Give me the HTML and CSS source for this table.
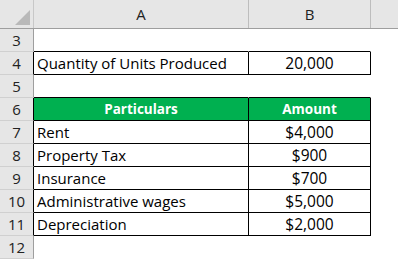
FILE: index.html
```html
<!DOCTYPE html>
<html>
<head>
<meta charset="utf-8">
<link rel="stylesheet" href="styles.css">
</head>
<body>
<div class="sheet">
  <div class="hdr">
    <div class="corner"><span class="tri"></span></div>
    <div class="ch ca">A</div>
    <div class="ch cb">B</div>
    <div class="ch cr"></div>
  </div>
  <div class="row">
    <div class="rh">3</div>
    <div class="c ca bb"></div>
    <div class="c cb bb"></div>
    <div class="c cr"></div>
  </div>
  <div class="row">
    <div class="rh k">4</div>
    <div class="c ca bb br">Quantity of Units Produced</div>
    <div class="c cb bb br num">20,000</div>
    <div class="c cr"></div>
  </div>
  <div class="row">
    <div class="rh">5</div>
    <div class="c ca bb"></div>
    <div class="c cb bb"></div>
    <div class="c cr"></div>
  </div>
  <div class="row">
    <div class="rh k">6</div>
    <div class="c ca bb br green">Particulars</div>
    <div class="c cb bb br green">Amount</div>
    <div class="c cr"></div>
  </div>
  <div class="row">
    <div class="rh k">7</div>
    <div class="c ca bb br">Rent</div>
    <div class="c cb bb br num">$4,000</div>
    <div class="c cr"></div>
  </div>
  <div class="row">
    <div class="rh k">8</div>
    <div class="c ca bb br">Property Tax</div>
    <div class="c cb bb br num">$900</div>
    <div class="c cr"></div>
  </div>
  <div class="row">
    <div class="rh k">9</div>
    <div class="c ca bb br">Insurance</div>
    <div class="c cb bb br num">$700</div>
    <div class="c cr"></div>
  </div>
  <div class="row">
    <div class="rh k">10</div>
    <div class="c ca bb br">Administrative wages</div>
    <div class="c cb bb br num">$5,000</div>
    <div class="c cr"></div>
  </div>
  <div class="row">
    <div class="rh k">11</div>
    <div class="c ca bb br">Depreciation</div>
    <div class="c cb bb br num">$2,000</div>
    <div class="c cr"></div>
  </div>
  <div class="row">
    <div class="rh">12</div>
    <div class="c ca"></div>
    <div class="c cb"></div>
    <div class="c cr"></div>
  </div>
</div>
</body>
</html>
```
FILE: styles.css
```css
html, body {
  margin: 0;
  padding: 0;
  background: #ffffff;
}
.sheet {
  width: 398px;
  height: 260px;
  overflow: hidden;
  font-family: "Open Sans", "Liberation Sans", sans-serif;
  font-size: 15px;
  color: #000;
}
.hdr {
  display: flex;
  height: 29px;
  background: #e6e6e6;
  border-bottom: 1px solid #9e9e9e;
  box-sizing: border-box;
}
.corner {
  width: 34px;
  box-sizing: border-box;
  border-right: 1px solid #c8c8c8;
  position: relative;
}
.tri {
  position: absolute;
  right: 3px;
  bottom: 3px;
  width: 0;
  height: 0;
  border-left: 15px solid transparent;
  border-bottom: 15px solid #b9b9b9;
}
.ch {
  box-sizing: border-box;
  border-right: 1px solid #bdbdbd;
  display: flex;
  align-items: center;
  justify-content: center;
  color: #222;
  font-size: 15px;
}
.row {
  display: flex;
  height: 23px;
}
.rh {
  width: 34px;
  box-sizing: border-box;
  background: #e6e6e6;
  border-right: 1px solid #9e9e9e;
  border-bottom: 1px solid #d0d0d0;
  display: flex;
  align-items: center;
  justify-content: center;
  color: #222;
  font-size: 15px;
}
.rh.k {
  border-right-color: #000;
}
.c {
  box-sizing: border-box;
  border-bottom: 1px solid transparent;
  border-right: 1px solid transparent;
  display: flex;
  align-items: center;
  padding-left: 3px;
  white-space: nowrap;
}
.ca { width: 215px; }
.cb { width: 122px; }
.cr { width: 27px; border-right: none; }
.bb { border-bottom-color: #000; }
.br { border-right-color: #000; }
.num {
  justify-content: center;
  padding-left: 0;
  font-size: 15.5px;
}
.green {
  background: #00b050;
  color: #fff;
  font-weight: bold;
  font-size: 13.5px;
  justify-content: center;
  padding-left: 0;
}
```
